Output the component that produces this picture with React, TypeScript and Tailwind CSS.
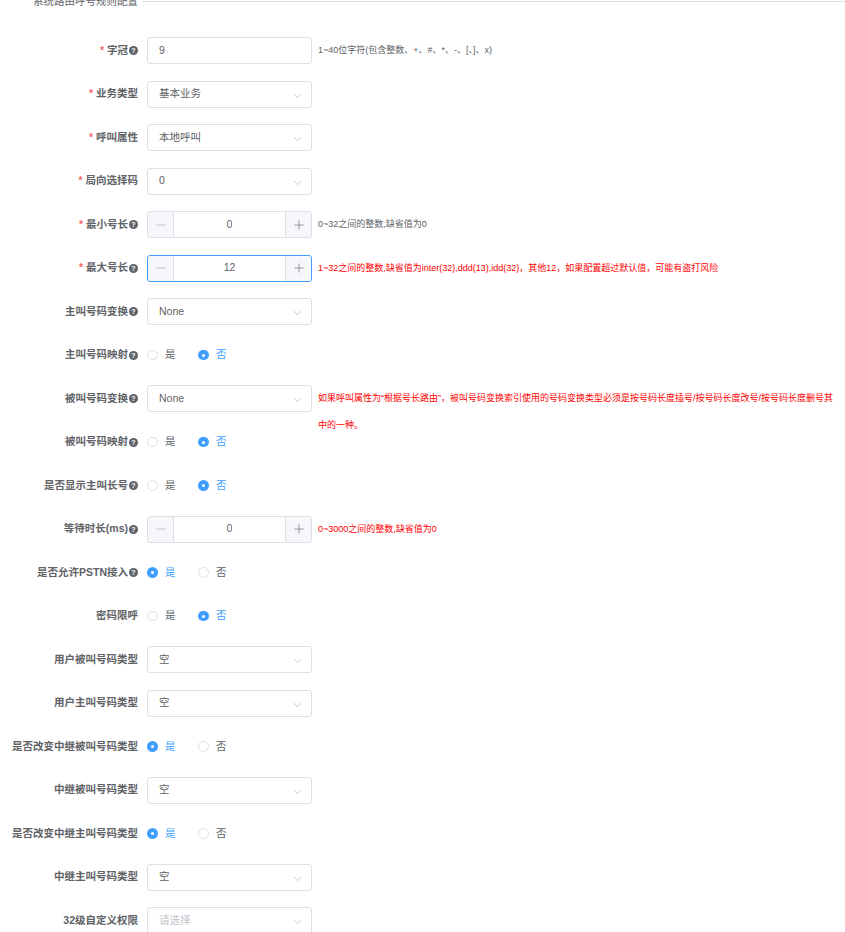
import React from "react";

const FONT = { fontFamily: '"Liberation Sans", "Noto Sans CJK SC", sans-serif' };

function Q() {
  return (
    <span className="ml-[1px] inline-flex h-[9px] w-[9px] items-center justify-center rounded-full bg-[#5f6268] text-[7px] font-bold leading-none text-white">
      ?
    </span>
  );
}

function Label({ text, req, q }: { text: string; req?: boolean; q?: boolean }) {
  return (
    <div className="flex w-[147px] shrink-0 items-center justify-end pr-[9px] text-[10.5px] font-semibold text-[#606266] h-[27px] whitespace-nowrap">
      {req && <span className="mr-[3px] text-[#f56c6c]">*</span>}
      <span>{text}</span>
      {q && <Q />}
    </div>
  );
}

function Chevron() {
  return (
    <svg width="9" height="6" viewBox="0 0 9 6" className="absolute right-[9px] top-[11px]">
      <path d="M0.8 1 L4.5 4.6 L8.2 1" fill="none" stroke="#c0c4cc" strokeWidth="0.9" />
    </svg>
  );
}

function Input({ value }: { value: string }) {
  return (
    <div className="relative flex h-[27px] w-[165px] shrink-0 items-center rounded-[3px] border border-[#dcdfe6] bg-white pl-[11px] text-[10.5px] text-[#606266]">
      {value}
    </div>
  );
}

function Select({ value, placeholder }: { value?: string; placeholder?: string }) {
  return (
    <div className="relative flex h-[27px] w-[165px] shrink-0 items-center rounded-[3px] border border-[#dcdfe6] bg-white pl-[11px] text-[10.5px] text-[#606266]">
      {value ? <span>{value}</span> : <span className="text-[#c0c4cc]">{placeholder}</span>}
      <Chevron />
    </div>
  );
}

function NumInput({ value, focus }: { value: string; focus?: boolean }) {
  return (
    <div
      className={
        focus
          ? "relative flex h-[27px] w-[165px] shrink-0 rounded-[3px] border border-[#409eff] bg-white text-[10.5px] text-[#606266]"
          : "relative flex h-[27px] w-[165px] shrink-0 rounded-[3px] border border-[#dcdfe6] bg-white text-[10.5px] text-[#606266]"
      }
    >
      <div className="flex w-[26px] items-center justify-center rounded-l-[3px] border-r border-[#dcdfe6] bg-[#f5f7fa]">
        <svg width="10" height="10" viewBox="0 0 10 10">
          <path d="M0.5 5 H9.5" stroke="#c0c4cc" strokeWidth="1" />
        </svg>
      </div>
      <div className="flex flex-1 items-center justify-center">{value}</div>
      <div className="flex w-[26px] items-center justify-center rounded-r-[3px] border-l border-[#dcdfe6] bg-[#f5f7fa]">
        <svg width="10" height="10" viewBox="0 0 10 10">
          <path d="M0.5 5 H9.5 M5 0.5 V9.5" stroke="#909399" strokeWidth="1" />
        </svg>
      </div>
    </div>
  );
}

function Radio({ yes }: { yes: boolean }) {
  const item = (label: string, checked: boolean) => (
    <div className="flex items-center">
      {checked ? (
        <span className="flex h-[10.5px] w-[10.5px] items-center justify-center rounded-full bg-[#409eff]">
          <span className="h-[3px] w-[3px] rounded-full bg-white" />
        </span>
      ) : (
        <span className="h-[10.5px] w-[10.5px] rounded-full border border-[#dcdfe6] bg-white" />
      )}
      <span className={checked ? "ml-[7.5px] text-[10.5px] text-[#409eff]" : "ml-[7.5px] text-[10.5px] text-[#606266]"}>{label}</span>
    </div>
  );
  return (
    <div className="flex h-[27px] items-center gap-[22.5px]">
      {item("是", yes)}
      {item("否", !yes)}
    </div>
  );
}

function Hint({ text, red, wide }: { text: string; red?: boolean; wide?: boolean }) {
  return (
    <div
      className={
        (red ? "text-[#ff0000] " : "text-[#606266] ") +
        (wide ? "w-[522px] " : "whitespace-nowrap ") +
        "ml-[6px] text-[9px] leading-[27px]"
      }
    >
      {text}
    </div>
  );
}

function Row({ children }: { children: React.ReactNode }) {
  return <div className="flex h-[27px] items-start mb-[16.5px]">{children}</div>;
}

export default function App() {
  return (
    <div className="relative h-[932px] w-[845px] overflow-hidden bg-white" style={FONT}>
      <div className="-mt-[6px] flex items-center">
        <div className="ml-[33px] shrink-0 text-[10.5px] leading-[14px] text-[#606266]">系统路由呼号规则配置</div>
        <div className="ml-[4px] h-px flex-1 bg-[#dcdfe6]" />
      </div>
      <div className="pt-[29px]">
        <Row>
          <Label text="字冠" req q />
          <Input value="9" />
          <Hint text="1~40位字符(包含整数、+、#、*、-、[、]、x)" />
        </Row>
        <Row>
          <Label text="业务类型" req />
          <Select value="基本业务" />
        </Row>
        <Row>
          <Label text="呼叫属性" req />
          <Select value="本地呼叫" />
        </Row>
        <Row>
          <Label text="局向选择码" req />
          <Select value="0" />
        </Row>
        <Row>
          <Label text="最小号长" req q />
          <NumInput value="0" />
          <Hint text="0~32之间的整数,缺省值为0" />
        </Row>
        <Row>
          <Label text="最大号长" req q />
          <NumInput value="12" focus />
          <Hint red text="1~32之间的整数,缺省值为inter(32),ddd(13),idd(32)，其他12，如果配置超过默认值，可能有盗打风险" />
        </Row>
        <Row>
          <Label text="主叫号码变换" q />
          <Select value="None" />
        </Row>
        <Row>
          <Label text="主叫号码映射" q />
          <Radio yes={false} />
        </Row>
        <Row>
          <Label text="被叫号码变换" q />
          <Select value="None" />
          <Hint red wide text="如果呼叫属性为“根据号长路由”，被叫号码变换索引使用的号码变换类型必须是按号码长度插号/按号码长度改号/按号码长度删号其中的一种。" />
        </Row>
        <Row>
          <Label text="被叫号码映射" q />
          <Radio yes={false} />
        </Row>
        <Row>
          <Label text="是否显示主叫长号" q />
          <Radio yes={false} />
        </Row>
        <Row>
          <Label text="等待时长(ms)" q />
          <NumInput value="0" />
          <Hint red text="0~3000之间的整数,缺省值为0" />
        </Row>
        <Row>
          <Label text="是否允许PSTN接入" q />
          <Radio yes={true} />
        </Row>
        <Row>
          <Label text="密码限呼" />
          <Radio yes={false} />
        </Row>
        <Row>
          <Label text="用户被叫号码类型" />
          <Select value="空" />
        </Row>
        <Row>
          <Label text="用户主叫号码类型" />
          <Select value="空" />
        </Row>
        <Row>
          <Label text="是否改变中继被叫号码类型" />
          <Radio yes={true} />
        </Row>
        <Row>
          <Label text="中继被叫号码类型" />
          <Select value="空" />
        </Row>
        <Row>
          <Label text="是否改变中继主叫号码类型" />
          <Radio yes={true} />
        </Row>
        <Row>
          <Label text="中继主叫号码类型" />
          <Select value="空" />
        </Row>
        <Row>
          <Label text="32级自定义权限" />
          <Select placeholder="请选择" />
        </Row>
      </div>
    </div>
  );
}
